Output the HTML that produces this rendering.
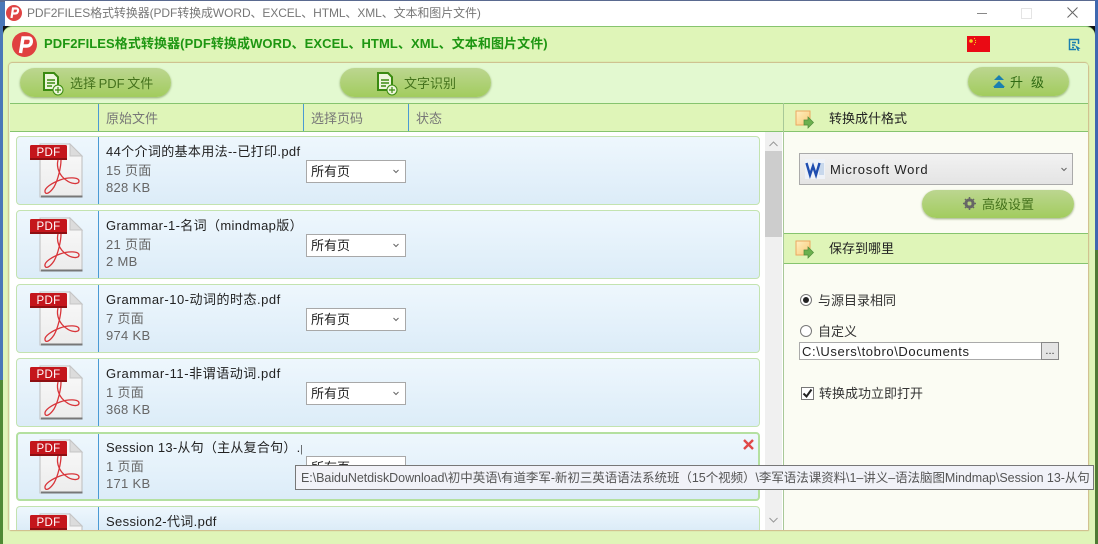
<!DOCTYPE html>
<html lang="zh-CN"><head><meta charset="utf-8">
<style>
html,body{margin:0;padding:0}
body{width:1098px;height:544px;position:relative;overflow:hidden;background:#4a78b8;font-family:"Liberation Sans","Noto Sans CJK SC",sans-serif;font-size:13px;color:#222}
.a{position:absolute}
.t{position:absolute;white-space:nowrap;line-height:18px}
.btn{position:absolute;border-radius:15px;background:linear-gradient(#bcd690,#a2cc5e);box-shadow:0 1px 2px rgba(90,120,50,.6);color:#3d6b16}
.row{position:absolute;left:16px;width:744px;height:69px;box-sizing:border-box;border:1px solid #c3e3b0;border-radius:4px;background:linear-gradient(#eef7fd,#dcecf8)}
.row .ln{position:absolute;left:81px;top:0;bottom:0;width:1px;background:#4a9ad4}
.row svg.pi{position:absolute;left:13px;top:6px}
.row .lbl{position:absolute;left:14px;top:9px;width:35px;height:14px;line-height:14px;text-align:center;color:#fff;font-size:11.5px;letter-spacing:.3px}
.row .n{position:absolute;left:89px;top:6px;white-space:nowrap;line-height:18px;color:#222;letter-spacing:.35px}
.row .s1,.row .s2{position:absolute;left:89px;white-space:nowrap;line-height:18px;color:#666;letter-spacing:.3px}
.row .s1{top:25px}.row .s2{top:42px}
.row .sel{position:absolute;left:289px;top:23px;width:100px;height:23px;box-sizing:border-box;border:1px solid #a8a8a8;background:#fff;line-height:22px;padding-left:4px;color:#222}
.sel svg{position:absolute;right:5px;top:8px}
.hd{position:absolute;color:#777;line-height:18px}
.sec{position:absolute;left:784px;width:304px;height:29px;background:#dff5b8;border-top:1px solid #86c46e;border-bottom:1px solid #86c46e}
</style></head><body>
<svg width="0" height="0" style="position:absolute">
<defs>
<linearGradient id="pg" x1="0" y1="0" x2="0" y2="1"><stop offset="0" stop-color="#fafafa"/><stop offset="1" stop-color="#ececec"/></linearGradient>
<linearGradient id="og" x1="0" y1="0" x2="1" y2="1"><stop offset="0" stop-color="#fff0c0"/><stop offset="1" stop-color="#f8c878"/></linearGradient>
<symbol id="pdf" viewBox="0 0 56 56">
<path d="M10 1H40L52 13V54H10Z" fill="url(#pg)" stroke="#bdbdbd"/>
<path d="M11 53.500H52.500" stroke="#777" stroke-width="2"/>
<path d="M40 1V13H52Z" fill="#dcdcdc" stroke="#c5c5c5"/>
<rect x="0" y="2" width="37" height="15" rx="1.500" fill="#c4161c"/>
<rect x="0" y="15" width="37" height="2" fill="#8e0f12"/>
<path d="M28 17C26 25 30 33 36 37C41 41 49 42 49 38C49 34 38 34 30 37C22 40 14 45 15 49C16 52 20 50 24 44C28 37 31 24 31 17" fill="none" stroke="#d8353a" stroke-width="1.300"/>
</symbol>
<symbol id="sec" viewBox="0 0 20 20">
<rect x="1" y="1" width="14" height="14" fill="url(#og)" stroke="#eba861"/>
<path d="M9 6H13V3L18.500 8.500L13 14V11H9Z" fill="#6cb04e" stroke="#4e8e3a" stroke-width=".7" transform="translate(0 4)"/>
</symbol>
<symbol id="doc" viewBox="0 0 22 24">
<path d="M2 1H12L16 5V18H2Z" fill="#eef6dc" stroke="#3a8a10" stroke-width="2"/>
<path d="M5 8H13M5 11H13M5 14H10" stroke="#3a8a10" stroke-width="1.500"/>
<circle cx="16" cy="18" r="5" fill="#eef6dc" stroke="#3a8a10"/>
<path d="M13 18H19M16 15V21" stroke="#3a8a10" stroke-width="1.200"/>
</symbol>
<symbol id="chev" viewBox="0 0 8 5"><path d="M1.500 1L4 3.500L6.500 1" fill="none" stroke="#666" stroke-width="1"/></symbol>
</defs></svg>

<!-- wallpaper edges -->
<div class="a" style="left:0;top:0;width:1098px;height:2px;background:#5a6a90"></div>
<div class="a" style="left:0;top:380px;width:3px;height:164px;background:#4f8a35"></div>
<div class="a" style="left:1095px;top:250px;width:3px;height:294px;background:#4f7a35"></div>
<div class="a" style="left:1095px;top:0;width:3px;height:250px;background:#3f68b0"></div>
<div class="a" style="left:3px;top:26px;width:9px;height:9px;background:#111"></div>
<div class="a" style="left:1086px;top:26px;width:9px;height:9px;background:#111"></div>

<!-- title bar -->
<div class="a" style="left:5px;top:1px;width:1090px;height:25px;background:#fff"></div>
<svg class="a" style="left:6px;top:5px" width="16" height="16" viewBox="0 0 16 16"><circle cx="8" cy="8" r="8" fill="#e04444"/><path d="M5.500 13L7 3.500H10.500C13 3.500 12.500 8.500 9 8.500H7" fill="none" stroke="#fff" stroke-width="2.200"/></svg>
<div class="t" style="left:27px;top:4px;color:#777;font-size:12px;letter-spacing:-.1px">PDF2FILES格式转换器(PDF转换成WORD、EXCEL、HTML、XML、文本和图片文件)</div>
<div class="a" style="left:977px;top:13px;width:10px;height:1px;background:#888"></div>
<div class="a" style="left:1021px;top:8px;width:9px;height:9px;border:1px solid #e4e4e4"></div>
<svg class="a" style="left:1067px;top:7px" width="11" height="11"><path d="M.5 .5L10.500 10.500M10.500 .5L.5 10.500" stroke="#666" stroke-width="1"/></svg>

<!-- window green -->
<div class="a" style="left:3px;top:26px;width:1092px;height:518px;background:#dff5b8;border-top:1px solid #86c46e;box-sizing:border-box;border-radius:9px 9px 0 0"></div>
<svg class="a" style="left:12px;top:32px" width="25" height="25" viewBox="0 0 25 25"><circle cx="12.500" cy="12.500" r="12.500" fill="#e04040"/><path d="M8.500 21L11 6H16.500C21 6 20 14 15 14H11" fill="none" stroke="#fff" stroke-width="3.400"/></svg>
<div class="t" style="left:44px;top:35px;color:#1e9612;font-weight:bold;font-size:13px;letter-spacing:.08px">PDF2FILES格式转换器(PDF转换成WORD、EXCEL、HTML、XML、文本和图片文件)</div>
<svg class="a" style="left:967px;top:36px" width="23" height="16" viewBox="0 0 23 16"><rect width="23" height="16" fill="#ea0a14"/><circle cx="4" cy="5" r="1.800" fill="#f5d020"/><circle cx="7.500" cy="2.500" r=".6" fill="#f5d020"/><circle cx="8.500" cy="4.500" r=".6" fill="#f5d020"/><circle cx="8.500" cy="6.500" r=".6" fill="#f5d020"/><circle cx="7.500" cy="8.500" r=".6" fill="#f5d020"/></svg>
<svg class="a" style="left:1068px;top:38px" width="13" height="13" viewBox="0 0 13 13"><path d="M8 11.500H1.500V1.500H10.500V6M4 4.500H8M4 7H7M4 9.500H6" fill="none" stroke="#1a7fb0" stroke-width="1.500"/><path d="M7 7L12.500 10.500L10.500 11L11.500 13L9.500 12.500Z" fill="#1a7fb0"/></svg>

<!-- main panel -->
<div class="a" style="left:9px;top:63px;width:1079px;height:467px;background:#e3f9d0;box-shadow:0 -1px 1px #cdb98a,-1px 0 1px #cfc292,1px 1px 1px #cfb98a;border-radius:3px 3px 0 0"></div>

<!-- toolbar -->
<div class="btn" style="left:20px;top:68px;width:151px;height:29px"></div>
<svg class="a" style="left:42px;top:72px" width="22" height="24"><use href="#doc"/></svg>
<div class="t" style="left:70px;top:75px;color:#44721c;word-spacing:-1px">选择 PDF 文件</div>
<div class="btn" style="left:340px;top:68px;width:151px;height:29px"></div>
<svg class="a" style="left:376px;top:72px" width="22" height="24"><use href="#doc"/></svg>
<div class="t" style="left:404px;top:75px;color:#44721c">文字识别</div>
<div class="btn" style="left:968px;top:67px;width:101px;height:29px"></div>
<svg class="a" style="left:993px;top:75px" width="12" height="13" viewBox="0 0 12 13"><path d="M6 0L11 5H1Z" fill="#1a7fb0"/><path d="M6 6L12 12H0Z" fill="#1a7fb0"/><path d="M1 12.500H11" stroke="#1a7fb0"/></svg>
<div class="t" style="left:1010px;top:74px;color:#2f6a12;letter-spacing:0"><span>升</span><span style="margin-left:8px">级</span></div>

<!-- column header -->
<div class="a" style="left:10px;top:103px;width:773px;height:29px;background:#dff5b8;border-top:1px solid #86c46e;border-bottom:1px solid #86c46e;box-sizing:border-box"></div>
<div class="a" style="left:98px;top:104px;width:1px;height:27px;background:#4a9ad4"></div>
<div class="a" style="left:303px;top:104px;width:1px;height:27px;background:#4a9ad4"></div>
<div class="a" style="left:408px;top:104px;width:1px;height:27px;background:#4a9ad4"></div>
<div class="hd" style="left:106px;top:110px">原始文件</div>
<div class="hd" style="left:311px;top:110px">选择页码</div>
<div class="hd" style="left:416px;top:110px">状态</div>

<!-- list -->
<div class="a" style="left:10px;top:132px;width:773px;height:398px;background:#fff;overflow:hidden">
<div style="position:absolute;left:-10px;top:-132px;width:783px;height:530px">

<div class="row" style="top:136px"><svg class="pi" width="56" height="56"><use href="#pdf"/></svg><div class="lbl">PDF</div><div class="ln"></div><div class="n">44个介词的基本用法--已打印.pdf</div><div class="s1">15 页面</div><div class="s2">828 KB</div><div class="sel">所有页<svg width="8" height="5"><use href="#chev"/></svg></div></div>

<div class="row" style="top:210px"><svg class="pi" width="56" height="56"><use href="#pdf"/></svg><div class="lbl">PDF</div><div class="ln"></div><div class="n">Grammar-1-名词（mindmap版）</div><div class="s1">21 页面</div><div class="s2">2 MB</div><div class="sel">所有页<svg width="8" height="5"><use href="#chev"/></svg></div></div>

<div class="row" style="top:284px"><svg class="pi" width="56" height="56"><use href="#pdf"/></svg><div class="lbl">PDF</div><div class="ln"></div><div class="n" style="letter-spacing:.5px">Grammar-10-动词的时态.pdf</div><div class="s1">7 页面</div><div class="s2">974 KB</div><div class="sel">所有页<svg width="8" height="5"><use href="#chev"/></svg></div></div>

<div class="row" style="top:358px"><svg class="pi" width="56" height="56"><use href="#pdf"/></svg><div class="lbl">PDF</div><div class="ln"></div><div class="n" style="letter-spacing:.55px">Grammar-11-非谓语动词.pdf</div><div class="s1">1 页面</div><div class="s2">368 KB</div><div class="sel">所有页<svg width="8" height="5"><use href="#chev"/></svg></div></div>

<div class="row" style="top:432px;border:2px solid #b4e0a0"><svg class="pi" width="56" height="56" style="left:12px;top:5px"><use href="#pdf"/></svg><div class="lbl" style="left:13px;top:8px">PDF</div><div class="ln" style="left:80px"></div><div class="n" style="left:88px;top:5px;width:196px;overflow:hidden;letter-spacing:.25px">Session 13-从句（主从复合句）.pdf</div><div class="s1" style="left:88px;top:24px">1 页面</div><div class="s2" style="left:88px;top:41px">171 KB</div><div class="sel" style="left:288px;top:22px">所有页<svg width="8" height="5"><use href="#chev"/></svg></div><svg class="a" style="left:725px;top:5px" width="11" height="11"><path d="M1 1L10 10M10 1L1 10" stroke="#e04848" stroke-width="2.400"/></svg></div>

<div class="row" style="top:506px;height:24px;border-bottom:0;border-radius:4px 4px 0 0;overflow:hidden"><svg class="pi" width="56" height="17" viewBox="0 0 56 17"><use href="#pdf" width="56" height="56"/></svg><div class="lbl">PDF</div><div class="ln"></div><div class="n">Session2-代词.pdf</div></div>

<!-- scrollbar -->
<div class="a" style="left:765px;top:132px;width:17px;height:398px;background:#f0f0f0"></div>
<div class="a" style="left:765px;top:151px;width:17px;height:86px;background:#cdcdcd"></div>
<svg class="a" style="left:769px;top:141px" width="9" height="6"><path d="M.5 5L4.500 1L8.500 5" fill="none" stroke="#999"/></svg>
<svg class="a" style="left:769px;top:517px" width="9" height="6"><path d="M.5 1L4.500 5L8.500 1" fill="none" stroke="#999"/></svg>
</div></div>

<!-- right panel -->
<div class="a" style="left:783px;top:103px;width:1px;height:427px;background:#a8c898"></div>
<div class="a" style="left:784px;top:132px;width:304px;height:398px;background:#fbfcf3"></div>
<div class="sec" style="top:103px;box-sizing:border-box"></div>
<svg class="a" style="left:795px;top:110px" width="20" height="20"><use href="#sec"/></svg>
<div class="t" style="left:829px;top:110px;color:#222">转换成什格式</div>

<div class="a" style="left:799px;top:153px;width:274px;height:32px;box-sizing:border-box;border:1px solid #aaa;background:linear-gradient(#f2f2f2,#e4e4e4)"></div>
<svg class="a" style="left:805px;top:159px" width="20" height="20" viewBox="0 0 20 20"><rect width="20" height="20" fill="#eef2f8"/><rect x="14" y="4" width="5" height="12" fill="#c8d8ec"/><path d="M1.500 4L5 16L8 7L11 16L14.500 4" fill="none" stroke="#1f4eb0" stroke-width="2.400"/></svg>
<div class="t" style="left:830px;top:161px;letter-spacing:.8px;color:#222">Microsoft Word</div>
<svg class="a" style="left:1060px;top:167px" width="8" height="5"><use href="#chev"/></svg>

<div class="btn" style="left:922px;top:190px;width:152px;height:28px"></div>
<svg class="a" style="left:963px;top:197px" width="13" height="13" viewBox="0 0 13 13"><circle cx="6.500" cy="6.500" r="3.800" fill="none" stroke="#666" stroke-width="2.600"/><path d="M6.500 0V13M0 6.500H13M2 2L11 11M11 2L2 11" stroke="#666" stroke-width="1.500"/><circle cx="6.500" cy="6.500" r="2" fill="#b2d27a"/></svg>
<div class="t" style="left:982px;top:196px;color:#44721c">高级设置</div>

<div class="sec" style="top:233px;height:31px;box-sizing:border-box"></div>
<svg class="a" style="left:795px;top:240px" width="20" height="20"><use href="#sec"/></svg>
<div class="t" style="left:829px;top:240px;color:#222">保存到哪里</div>

<div class="a" style="left:800px;top:294px;width:12px;height:12px;box-sizing:border-box;border:1px solid #777;border-radius:50%;background:#fff"></div>
<div class="a" style="left:803px;top:297px;width:6px;height:6px;border-radius:50%;background:#222"></div>
<div class="t" style="left:818px;top:292px;color:#333">与源目录相同</div>
<div class="a" style="left:800px;top:325px;width:12px;height:12px;box-sizing:border-box;border:1px solid #777;border-radius:50%;background:#fff"></div>
<div class="t" style="left:818px;top:323px;color:#333">自定义</div>
<div class="a" style="left:799px;top:342px;width:243px;height:18px;box-sizing:border-box;border:1px solid #aaa;background:#fff"></div>
<div class="t" style="left:802px;top:343px;color:#222;letter-spacing:.6px">C:\Users\tobro\Documents</div>
<div class="a" style="left:1041px;top:342px;width:18px;height:18px;box-sizing:border-box;border:1px solid #888;background:#e4e4e4;text-align:center;line-height:16px;font-size:11px;color:#333">...</div>
<div class="a" style="left:801px;top:387px;width:13px;height:13px;box-sizing:border-box;border:1px solid #777;background:#fff"></div>
<svg class="a" style="left:802px;top:388px" width="11" height="11"><path d="M1.500 5.500L4.500 8.500L9.500 1.500" fill="none" stroke="#222" stroke-width="2"/></svg>
<div class="t" style="left:819px;top:385px;color:#333">转换成功立即打开</div>

<!-- tooltip -->
<div class="a" style="left:295px;top:465px;width:799px;height:25px;box-sizing:border-box;border:1px solid #777;background:#f1f2f8;overflow:hidden"><span style="position:absolute;left:5px;top:3px;white-space:nowrap;line-height:18px;color:#555;font-size:12.500px;letter-spacing:-.05px">E:\BaiduNetdiskDownload\初中英语\有道李军-新初三英语语法系统班（15个视频）\李军语法课资料\1–讲义–语法脑图Mindmap\Session 13-从句</span></div>
</body></html>
